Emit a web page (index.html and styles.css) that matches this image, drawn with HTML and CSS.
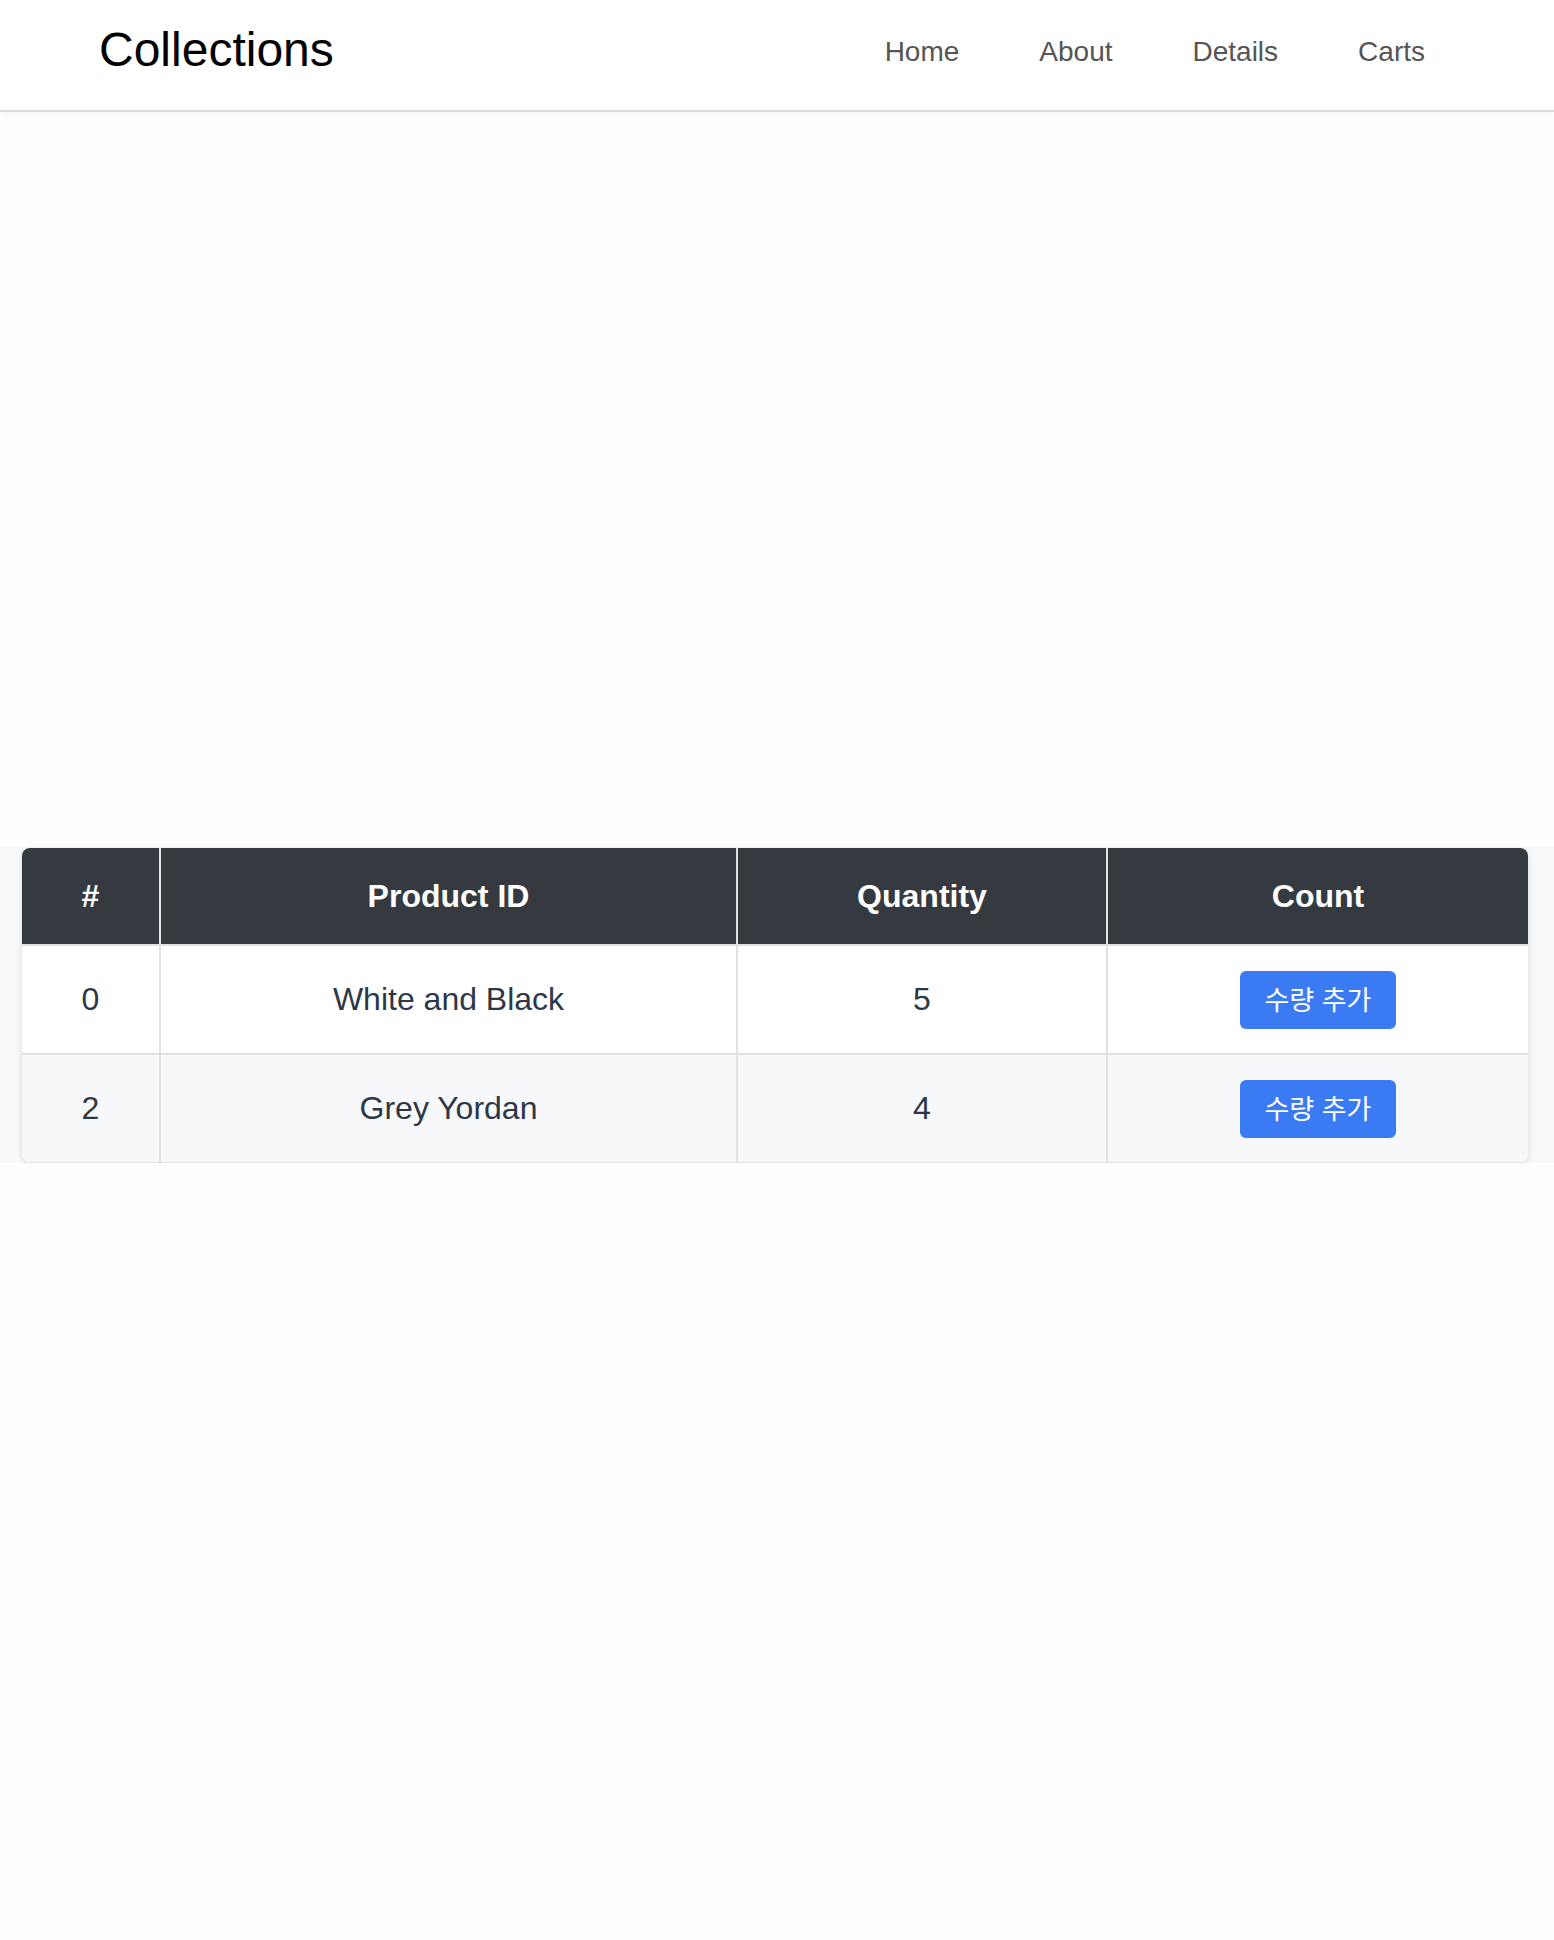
FILE: index.html
```html
<!DOCTYPE html>
<html lang="ko">
<head>
<meta charset="utf-8">
<title>Collections</title>
<link rel="stylesheet" href="styles.css">
</head>
<body>
<header class="topbar">
  <div class="brand">Collections</div>
  <nav class="nav">
    <a class="nav-link" href="#">Home</a>
    <a class="nav-link" href="#">About</a>
    <a class="nav-link" href="#">Details</a>
    <a class="nav-link" href="#">Carts</a>
  </nav>
</header>
<main>
  <div class="hero"></div>
  <section class="band">
    <div class="table-wrap">
      <table class="cart-table">
        <colgroup>
          <col class="c-idx">
          <col class="c-id">
          <col class="c-qty">
          <col class="c-count">
        </colgroup>
        <thead>
          <tr>
            <th>#</th>
            <th>Product ID</th>
            <th>Quantity</th>
            <th>Count</th>
          </tr>
        </thead>
        <tbody>
          <tr>
            <td>0</td>
            <td>White and Black</td>
            <td>5</td>
            <td><button class="btn">수량 추가</button></td>
          </tr>
          <tr class="alt">
            <td>2</td>
            <td>Grey Yordan</td>
            <td>4</td>
            <td><button class="btn">수량 추가</button></td>
          </tr>
        </tbody>
      </table>
    </div>
  </section>
</main>
</body>
</html>
```
FILE: styles.css
```css
html, body {
  margin: 0;
  padding: 0;
  background: #fefefe;
  font-family: "Liberation Sans", Arial, sans-serif;
}

.topbar {
  height: 110px;
  display: flex;
  align-items: center;
  justify-content: space-between;
  padding: 0 129px 0 99px;
  border-bottom: 2px solid #dcdcdc;
  box-shadow: 0 3px 8px rgba(0, 0, 0, 0.03);
  background: #fff;
  box-sizing: content-box;
}

.brand {
  font-size: 48px;
  color: #000;
  line-height: 1;
  padding-bottom: 10px;
}

.nav {
  display: flex;
  gap: 80px;
  padding-bottom: 6px;
}

.nav-link {
  font-size: 28px;
  color: #555;
  text-decoration: none;
}

.hero {
  height: 735px;
}

.band {
  background: #f8f9fa;
  padding: 1px 0 1px 22px;
}

.table-wrap {
  width: 1506px;
  border-radius: 8px;
  overflow: hidden;
  box-shadow: 0 2px 6px rgba(0, 0, 0, 0.13);
  background: #fff;
}

.cart-table {
  width: 100%;
  border-collapse: collapse;
  table-layout: fixed;
}

.c-idx { width: 138px; }
.c-id { width: 577px; }
.c-qty { width: 370px; }
.c-count { width: 421px; }

.cart-table th {
  background: #343a40;
  color: #fff;
  font-size: 32px;
  font-weight: bold;
  height: 96px;
  padding: 0;
  text-align: center;
  border-left: 2px solid #dee2e6;
  border-bottom: 2px solid #dee2e6;
}

.cart-table td {
  height: 107px;
  padding: 0 0 0 0;
  text-align: center;
  font-size: 32px;
  color: #2d3748;
  background: #fff;
  border-left: 2px solid #dee2e6;
  border-bottom: 2px solid #dee2e6;
}

.cart-table th:first-child,
.cart-table td:first-child {
  border-left: none;
}

.cart-table tbody tr:last-child td {
  border-bottom: none;
}

.cart-table tr.alt td {
  background: #f7f8fa;
}

.btn {
  background: #3a7bf4;
  color: #fff;
  border: none;
  border-radius: 6px;
  height: 58px;
  width: 156px;
  padding: 0 0 3px 0;
  font-family: "Noto Sans CJK KR", "Liberation Sans", sans-serif;
  font-size: 27px;
  line-height: 1;
  cursor: pointer;
}
```
